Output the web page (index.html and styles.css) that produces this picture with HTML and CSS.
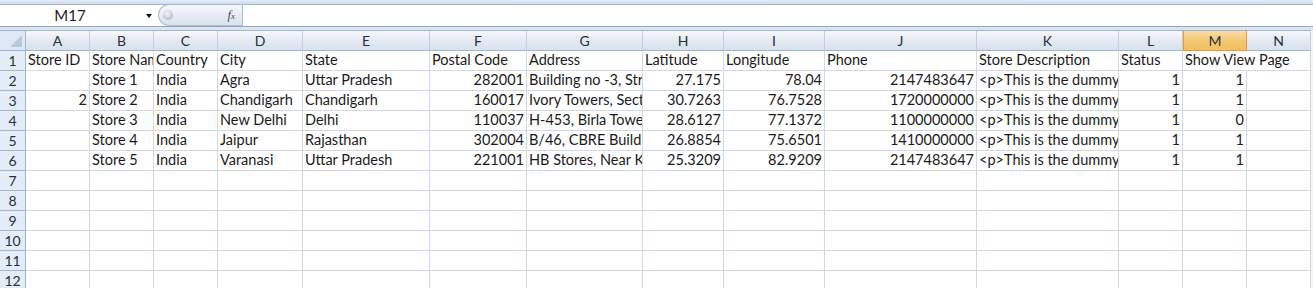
FILE: index.html
```html
<!DOCTYPE html>
<html>
<head>
  <link rel="stylesheet" href="styles.css">
</head>
<body>
  <div class="top-band"></div>

  <!-- Name box + formula bar -->
  <div class="formula-bar">
    <div class="name-box">
      <span class="name">M17</span>
      <span class="drop-arrow"></span>
    </div>
    <div class="fx-pill">
      <span class="knob"></span>
      <span class="fx"><i>f</i><small>x</small></span>
    </div>
    <div class="formula-input"></div>
  </div>

  <div class="gap"></div>

  <div class="sheet" id="sheet"></div>

  <script>
    const columns = ['A', 'B', 'C', 'D', 'E', 'F', 'G', 'H', 'I', 'J', 'K', 'L', 'M', 'N'];
    const selectedCol = 'M';

    // null = empty cell, numbers get right aligned
    const rows = [
      ['Store ID', 'Store Name', 'Country', 'City', 'State', 'Postal Code', 'Address', 'Latitude', 'Longitude', 'Phone', 'Store Description', 'Status', 'Show View Page', null],
      [null, 'Store 1', 'India', 'Agra', 'Uttar Pradesh', 282001, 'Building no -3, Street 12', 27.175, 78.04, 2147483647, '<p>This is the dummy content</p>', 1, 1, null],
      [2, 'Store 2', 'India', 'Chandigarh', 'Chandigarh', 160017, 'Ivory Towers, Sector 70', 30.7263, 76.7528, 1720000000, '<p>This is the dummy content</p>', 1, 1, null],
      [null, 'Store 3', 'India', 'New Delhi', 'Delhi', 110037, 'H-453, Birla Towers', 28.6127, 77.1372, 1100000000, '<p>This is the dummy content</p>', 1, 0, null],
      [null, 'Store 4', 'India', 'Jaipur', 'Rajasthan', 302004, 'B/46, CBRE Building', 26.8854, 75.6501, 1410000000, '<p>This is the dummy content</p>', 1, 1, null],
      [null, 'Store 5', 'India', 'Varanasi', 'Uttar Pradesh', 221001, 'HB Stores, Near Khojwan', 25.3209, 82.9209, 2147483647, '<p>This is the dummy content</p>', 1, 1, null]
    ];
    const totalRows = 12;

    const sheet = document.getElementById('sheet');

    function addCell(cls, text) {
      const el = document.createElement('div');
      el.className = cls;
      if (text !== null && text !== undefined) el.textContent = text;
      sheet.appendChild(el);
      return el;
    }

    // Column header row
    const corner = addCell('corner');
    corner.innerHTML = '<span class="corner-tri"></span>';
    columns.forEach(col => {
      addCell('col-head' + (col === selectedCol ? ' selected' : ''), col);
    });

    // Body rows
    for (let r = 0; r < totalRows; r++) {
      addCell('row-head', r + 1);
      const data = rows[r] || [];
      columns.forEach((_, c) => {
        const value = data[c];
        let cls = 'cell';
        if (typeof value === 'number') cls += ' num';
        // text spills into the next cell when that one is empty
        const next = data[c + 1];
        if (typeof value === 'string' && c < columns.length - 1 && (next === null || next === undefined) && data.length) {
          cls += ' spill';
        }
        addCell(cls, value);
      });
    }
  </script>
</body>
</html>
```

FILE: styles.css
```css
html, body {
  margin: 0;
  padding: 0;
}

body {
  width: 1313px;
  height: 288px;
  overflow: hidden;
  background: #f3f5f8;
  font-family: Lato, "Liberation Sans", sans-serif;
  color: #1a1a1a;
}

.top-band {
  height: 4px;
  background: linear-gradient(#e4edf8, #cfdcee);
  border-bottom: 1px solid #a3b8d3;
}

/* formula bar */
.formula-bar {
  height: 21px;
  display: flex;
  background: #fff;
  border-bottom: 1px solid #8fa6c4;
}

.name-box {
  width: 158px;
  display: flex;
  align-items: center;
}

.name {
  width: 140px;
  text-align: center;
  font-size: 15px;
  line-height: 21px;
}

.drop-arrow {
  width: 0;
  height: 0;
  border-left: 3.5px solid transparent;
  border-right: 3.5px solid transparent;
  border-top: 4px solid #111;
  margin-left: 6px;
}

.fx-pill {
  width: 84px;
  margin-top: -1px;
  height: 22px;
  box-sizing: border-box;
  border: 1px solid #a9bcd4;
  border-right: none;
  border-radius: 11px 0 0 11px;
  background: linear-gradient(#f6f8fb, #e6ebf2 55%, #dae2ec);
  display: flex;
  align-items: center;
  justify-content: space-between;
  padding: 0 7px 0 4px;
}

.knob {
  width: 10px;
  height: 10px;
  border-radius: 50%;
  background: radial-gradient(circle at 40% 35%, #f7f7f7, #c4c9cf 60%, #8e98a3);
}

.fx {
  font-family: "Liberation Serif", serif;
  color: #555;
  font-size: 13px;
}

.fx small {
  font-size: 9px;
  font-style: italic;
}

.formula-input {
  flex: 1;
  border-left: 1px solid #a9bcd4;
  background: #fff;
}

.gap {
  height: 3px;
  background: #dbe4f0;
}

/* grid */
.sheet {
  display: grid;
  grid-template-columns: 26px 64px 64px 64px 85px 127px 97px 116px 81px 101px 152px 142px 64px 64px 64px;
  grid-auto-rows: 20px;
  width: 1311px;
  border-top: 1px solid #9eb6ce;
  background: #fff;
}

.corner,
.col-head,
.row-head,
.cell {
  box-sizing: border-box;
  white-space: nowrap;
  overflow: hidden;
}

.corner {
  background: #dfe8f4;
  border-right: 1px solid #9eb6ce;
  border-bottom: 1px solid #9eb6ce;
  position: relative;
}

.corner-tri {
  position: absolute;
  right: 3px;
  bottom: 3px;
  width: 0;
  height: 0;
  border-left: 12px solid transparent;
  border-bottom: 12px solid #b8c9de;
}

.col-head {
  background: linear-gradient(#f7f9fc, #e4eaf3 50%, #d9e1ec);
  border-right: 1px solid #c0cfe1;
  border-bottom: 1px solid #9eb6ce;
  text-align: center;
  font-size: 14px;
  line-height: 19px;
  color: #27313d;
}

.col-head.selected {
  background: linear-gradient(#f9dca6, #f3c873 50%, #f1c15f);
  border: 1px solid #f29536;
  border-top: none;
}

.row-head {
  background: #e4ecf7;
  border-right: 1px solid #9eb6ce;
  border-bottom: 1px solid #9eb6ce;
  text-align: center;
  font-size: 14px;
  line-height: 19px;
  color: #27313d;
}

.cell {
  border-right: 1px solid #d0d7e5;
  border-bottom: 1px solid #d0d7e5;
  padding: 0 2px 1px 2px;
  font-size: 14.5px;
  line-height: 18px;
  display: flex;
  align-items: flex-end;
}

.cell.num {
  justify-content: flex-end;
}

.cell.spill {
  overflow: visible;
  border-right-color: transparent;
  position: relative;
  z-index: 1;
}
```
